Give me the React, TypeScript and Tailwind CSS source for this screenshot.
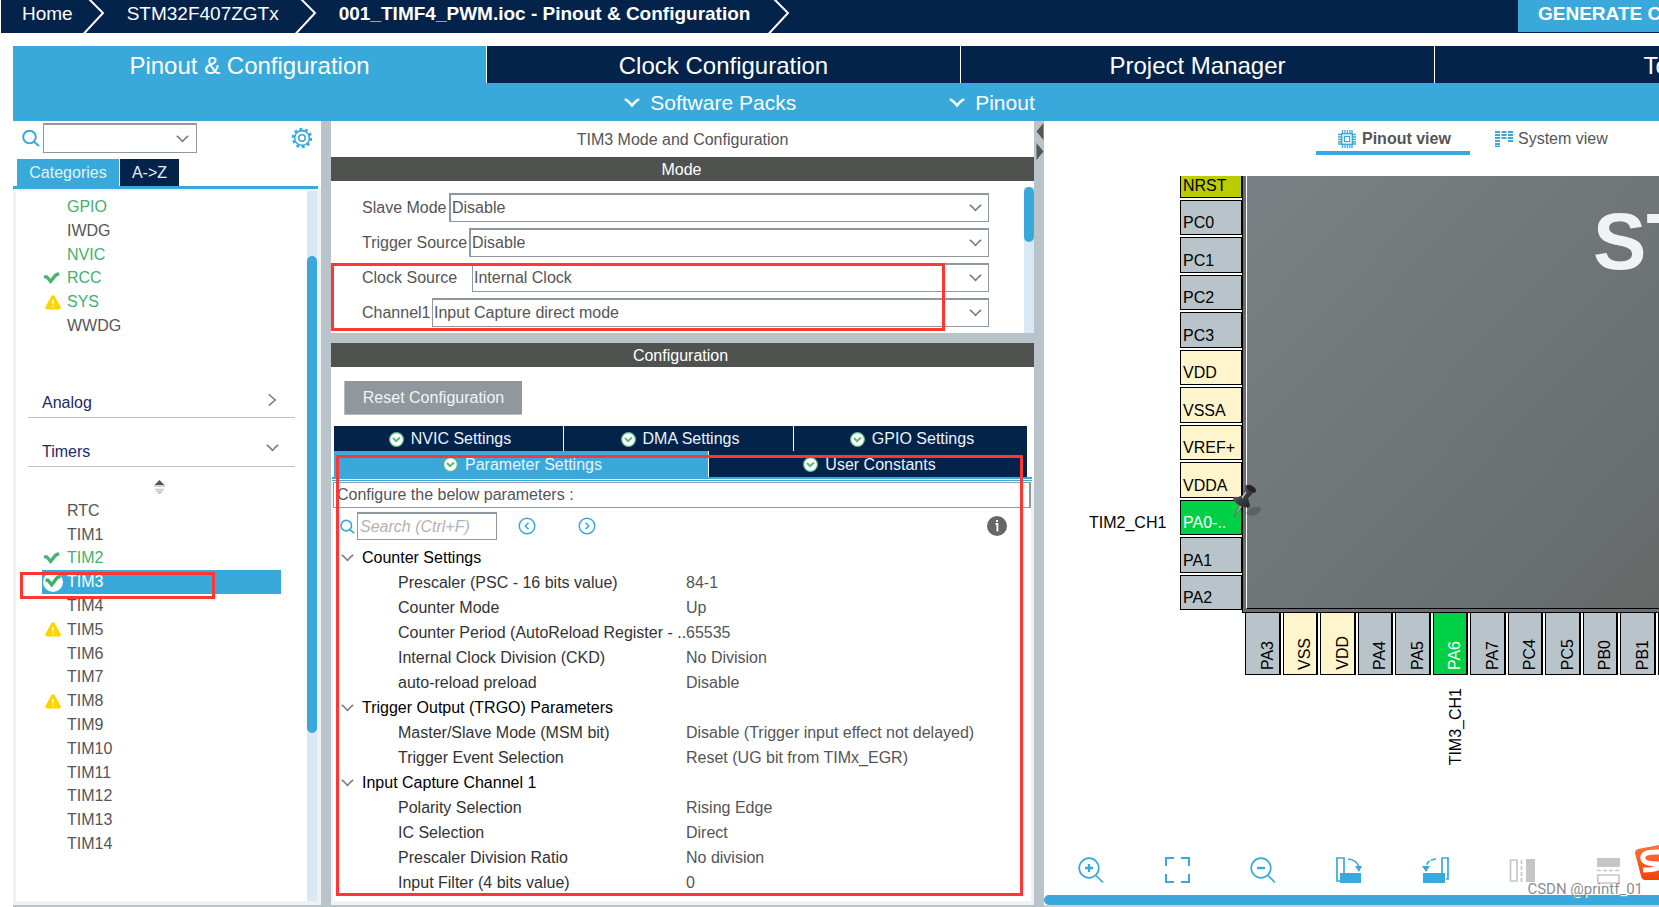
import { ReactNode } from 'react';
import clsx from 'clsx';

type Status = 'ok' | 'warn' | 'selected';

interface Item {
  name: string;
  status?: Status;
  enabled?: boolean;
}

const crumbs = [
  { label: 'Home', className: 'pr-[10px]' },
  { label: 'STM32F407ZGTx', className: 'pr-4' },
  { label: '001_TIMF4_PWM.ioc - Pinout & Configuration', className: 'pr-[18px] font-bold' },
];

const mainTabs = ['Pinout & Configuration', 'Clock Configuration', 'Project Manager', 'Tools'];

const systemCore: Item[] = [
  { name: 'GPIO', enabled: true },
  { name: 'IWDG' },
  { name: 'NVIC', enabled: true },
  { name: 'RCC', enabled: true, status: 'ok' },
  { name: 'SYS', enabled: true, status: 'warn' },
  { name: 'WWDG' },
];

const timers: Item[] = [
  { name: 'RTC' },
  { name: 'TIM1' },
  { name: 'TIM2', enabled: true, status: 'ok' },
  { name: 'TIM3', status: 'selected' },
  { name: 'TIM4' },
  { name: 'TIM5', status: 'warn' },
  { name: 'TIM6' },
  { name: 'TIM7' },
  { name: 'TIM8', status: 'warn' },
  { name: 'TIM9' },
  { name: 'TIM10' },
  { name: 'TIM11' },
  { name: 'TIM12' },
  { name: 'TIM13' },
  { name: 'TIM14' },
];

const modes = [
  { id: 'slave', label: 'Slave Mode', value: 'Disable', width: 'w-[87px]', border: 'border-l-2' },
  { id: 'trigger', label: 'Trigger Source', value: 'Disable', width: 'w-[107px]', border: 'border-l-2' },
  { id: 'clock', label: 'Clock Source', value: 'Internal Clock', width: 'w-[110px]', border: 'border-l' },
  { id: 'channel1', label: 'Channel1', value: 'Input Capture direct mode', width: 'w-[70px]', border: 'border-l' },
];

const parameters = [
  {
    group: 'Counter Settings',
    rows: [
      ['Prescaler (PSC - 16 bits value)', '84-1'],
      ['Counter Mode', 'Up'],
      ['Counter Period (AutoReload Register - ..', '65535'],
      ['Internal Clock Division (CKD)', 'No Division'],
      ['auto-reload preload', 'Disable'],
    ],
  },
  {
    group: 'Trigger Output (TRGO) Parameters',
    rows: [
      ['Master/Slave Mode (MSM bit)', 'Disable (Trigger input effect not delayed)'],
      ['Trigger Event Selection', 'Reset (UG bit from TIMx_EGR)'],
    ],
  },
  {
    group: 'Input Capture Channel 1',
    rows: [
      ['Polarity Selection', 'Rising Edge'],
      ['IC Selection', 'Direct'],
      ['Prescaler Division Ratio', 'No division'],
      ['Input Filter (4 bits value)', '0'],
    ],
  },
];

const leftPins = ['PC0', 'PC1', 'PC2', 'PC3', 'VDD', 'VSSA', 'VREF+', 'VDDA', 'PA0-..', 'PA1', 'PA2'];
const bottomPins = ['PA3', 'VSS', 'VDD', 'PA4', 'PA5', 'PA6', 'PA7', 'PC4', 'PC5', 'PB0', 'PB1', 'PB2'];

function pinColor(name: string) {
  if (name === 'PA0-..' || name === 'PA6') return 'bg-[#00d045] text-white';
  if (name.startsWith('V')) return 'bg-[#fff5cc] text-black';
  return 'bg-[#b8c3ca] text-black';
}

function Chevron({ className = 'text-[#7d7d7d]' }: { className?: string }) {
  return (
    <svg className={clsx('shrink-0', className)} width="13" height="8" viewBox="0 0 13 8" fill="none" stroke="currentColor" strokeWidth="1.5">
      <path d="M0.7 1C3 2 4.5 4.5 6.5 6.5C8.5 4.5 10 2 12.3 1" />
    </svg>
  );
}

function SearchIcon({ size }: { size: number }) {
  return (
    <svg className="shrink-0 text-[#39a9dc]" width={size} height={size} viewBox="0 0 18 18" fill="none" stroke="currentColor" strokeWidth="2">
      <circle cx="7.5" cy="8" r="6.3" />
      <path d="M11.5 12.5L17 17" />
    </svg>
  );
}

function GearIcon() {
  return (
    <svg width="22" height="22" viewBox="0 0 22 22" fill="none" stroke="#39a9dc">
      <circle cx="11" cy="11" r="9" strokeWidth="2.4" strokeDasharray="2.9 2.755" />
      <circle cx="11" cy="11" r="7.4" strokeWidth="1.6" />
      <circle cx="11" cy="11" r="3.2" strokeWidth="1.6" />
    </svg>
  );
}

function StatusIcon({ status }: { status?: Status }) {
  if (status === 'warn') {
    return (
      <svg className="ml-[3px]" width="16" height="15" viewBox="0 0 16 15">
        <path d="M6.3 1.2Q8 -0.8 9.7 1.2L15.6 12Q16.4 14.4 14 14.4H2Q-0.4 14.4 0.4 12Z" fill="#ffd500" />
        <path d="M8 5V9.6M8 11V12.6" stroke="#fff" strokeWidth="1.4" />
      </svg>
    );
  }
  if (status === 'ok') {
    return (
      <svg className="ml-px" width="17" height="13" viewBox="0 0 17 13" fill="none" stroke="#4bb272">
        <path d="M1 4.6L3.8 5L7.6 9.4L12.4 3.4L16 1.4" strokeWidth="3.4" />
      </svg>
    );
  }
  if (status === 'selected') {
    return (
      <svg className="ml-px" width="20" height="20" viewBox="0 0 20 20" fill="none">
        <circle cx="10" cy="10" r="10" fill="#fff" />
        <path d="M2.6 8L5 8.3L8.8 12.8L14 5.8L17.4 4" stroke="#41ad6d" strokeWidth="3.4" />
      </svg>
    );
  }
  return null;
}

function TabCheck() {
  return (
    <svg className="shrink-0" width="15" height="15" viewBox="0 0 15 15" fill="none">
      <circle cx="7.5" cy="7.5" r="6.9" fill="#fff" stroke="#58b77f" strokeWidth="1.2" />
      <path d="M4 6L7 9.2L11 5.4" stroke="#58b77f" strokeWidth="2" />
    </svg>
  );
}

function ItemList({ items, className }: { items: Item[]; className: string }) {
  return (
    <ul className={clsx('grid auto-rows-fr', className)}>
      {items.map(({ name, status, enabled }) => (
        <li key={name} className="px-[26px]">
          <button
            className={clsx(
              'flex h-full w-full items-center text-left leading-none',
              status === 'selected' && 'bg-[#39a9dc] text-white',
              enabled && 'text-[#45b06c]',
            )}
          >
            <span className="flex w-[25px] shrink-0 items-center">
              <StatusIcon status={status} />
            </span>
            {name}
          </button>
        </li>
      ))}
    </ul>
  );
}

function Header() {
  return (
    <header className="ml-px flex h-[33px] bg-[#03234b] text-[19px] text-white">
      <nav className="flex pl-[21px]">
        {crumbs.map(({ label, className }) => (
          <div key={label} className="flex">
            <a href="#" className={clsx('whitespace-nowrap leading-[27px]', className)}>
              {label}
            </a>
            <svg className="mr-[22px]" width="22" height="33" viewBox="0 0 22 33" fill="none" stroke="#fff" strokeWidth="2">
              <path d="M6 -1L20 13L0.5 34" />
            </svg>
          </div>
        ))}
      </nav>
      <button className="ml-auto h-8 w-[141px] overflow-hidden whitespace-nowrap bg-[#39a9dc] pb-[5px] pl-5 text-left font-bold">
        GENERATE CODE
      </button>
    </header>
  );
}

function MainTabs() {
  return (
    <>
      <nav className="mt-[13px] ml-[13px] flex overflow-hidden">
        {mainTabs.map((tab, i) => (
          <button
            key={tab}
            className={clsx(
              'h-[37px] w-[474px] shrink-0 border-r border-white pt-[2px] text-2xl leading-none text-white',
              i === 0 ? 'bg-[#39a9dc]' : 'bg-[#03234b]',
            )}
          >
            {tab}
          </button>
        ))}
      </nav>
      <div className="ml-[13px] flex h-[38px] items-center justify-center gap-[153px] bg-[#39a9dc] pr-[13px] pt-[2px] text-[21px] text-white">
        {['Software Packs', 'Pinout'].map((label) => (
          <button key={label} className="flex items-center gap-[10px]">
            <svg width="16" height="10" viewBox="0 0 16 10" fill="none" stroke="currentColor" strokeWidth="2.6">
              <path d="M0.8 1.5Q3 1.5 8 7.5Q13 1.5 15.2 1.5" />
            </svg>
            {label}
          </button>
        ))}
      </div>
    </>
  );
}

function Category({ name, children }: { name: string; children: ReactNode }) {
  return (
    <button className="mx-3 flex h-[49px] items-end justify-between border-b border-[#b8c3ca] pb-[2px] pl-[14px] text-left text-[#1d2a66]">
      {name}
      {children}
    </button>
  );
}

function Sidebar() {
  return (
    <aside className="flex w-[308px] shrink-0 flex-col">
      <div className="flex h-[34px] items-center pl-[9px] pr-2">
        <SearchIcon size={18} />
        <label className="sr-only" htmlFor="filter">
          Filter peripherals
        </label>
        <div className="relative ml-[3px]">
          <select id="filter" className="block h-[30px] w-[154px] appearance-none border border-t-2 border-[#8f989f] bg-white" />
          <Chevron className="pointer-events-none absolute right-2 top-3 text-[#7d7d7d]" />
        </div>
        <button aria-label="Settings" className="ml-auto">
          <GearIcon />
        </button>
      </div>
      <div className="mt-1 flex gap-px pl-1 text-[#e3f2fa]">
        <button className="h-[27px] w-[102px] bg-[#39a9dc] pt-px">Categories</button>
        <button className="h-[27px] w-[59px] bg-[#03234b] pt-px">A-&gt;Z</button>
      </div>
      <div className="mr-[3px] h-[3px] bg-[#39a9dc]" />
      <div className="flex grow border-b-4 border-l-[3px] border-r-4 border-t-2 border-[#eff1f3]">
        <div className="flex min-w-0 grow flex-col pt-1">
          <ItemList items={systemCore} className="h-[143px]" />
          <div className="h-[31px]" />
          <Category name="Analog">
            <svg className="mb-2 mr-[18px]" width="9" height="14" viewBox="0 0 9 14" fill="none" stroke="#7d7d7d" strokeWidth="1.5">
              <path d="M1 1C2 3 5 5 7.5 7C5 9 2 11 1 13" />
            </svg>
          </Category>
          <Category name="Timers">
            <Chevron className="mb-3 mr-4 text-[#7d7d7d]" />
          </Category>
          <div className="flex h-8 items-center justify-center pr-1 pt-2">
            <svg width="11" height="14" viewBox="0 0 11 14">
              <path d="M5.5 0L10.5 5H0.5Z" fill="#555" />
              <path d="M0 6H11M1 9.5H10M2.5 11.5H8.5M4 13.2H7" stroke="#c4c4c4" strokeWidth="1.6" />
            </svg>
          </div>
          <div className="relative">
            <ItemList items={timers} className="h-[357px]" />
            <div className="pointer-events-none absolute left-1 top-[73px] h-[27px] w-[195px] border-[3px] border-[#ff3733]" />
          </div>
        </div>
        <div className="w-[10px] shrink-0 bg-[#d9e8f5] pt-[65px]">
          <div className="h-[477px] rounded-full bg-[#39a9dc]" />
        </div>
      </div>
      <div className="h-[2px] bg-[#b8c3ca]" />
    </aside>
  );
}

function ModePanel() {
  return (
    <section>
      <h2 className="pt-px text-center leading-[35px]">TIM3 Mode and Configuration</h2>
      <h3 className="bg-[#505250] pr-[2px] pt-px text-center leading-[23px] text-white">Mode</h3>
      <div className="relative flex h-[152px]">
        <div className="flex grow flex-col gap-[6px] pl-[31px] pr-[35px] pt-3">
          {modes.map(({ id, label, value, width, border }) => (
            <div key={id} className="flex items-center">
              <label htmlFor={id} className={clsx('shrink-0 whitespace-nowrap', width)}>
                {label}
              </label>
              <div className="relative grow">
                <select
                  id={id}
                  className={clsx('block h-[29px] w-full appearance-none border-b border-r border-t-2 border-[#8f989f] bg-white pl-px', border)}
                >
                  <option>{value}</option>
                </select>
                <Chevron className="pointer-events-none absolute right-[7px] top-[11px] text-[#7d7d7d]" />
              </div>
            </div>
          ))}
        </div>
        <div className="mt-[6px] w-[10px] shrink-0 bg-[#d9e8f5]">
          <div className="h-[55px] rounded-full bg-[#39a9dc]" />
        </div>
        <div className="pointer-events-none absolute left-0 top-[82px] h-[68px] w-[614px] border-[3px] border-[#ff3733]" />
      </div>
    </section>
  );
}

function ConfigTab({ label, active }: { label: string; active?: boolean }) {
  return (
    <button
      className={clsx(
        'flex items-center justify-center gap-[7px] pl-[3px] pt-px text-[#eaf3fa]',
        active ? 'bg-[#39a9dc]' : 'bg-[#03234b]',
      )}
    >
      <TabCheck />
      {label}
    </button>
  );
}

function StepButton({ label, path }: { label: string; path: string }) {
  return (
    <button aria-label={label}>
      <svg width="18" height="18" viewBox="0 0 18 18" fill="none" stroke="#39a9dc" strokeWidth="1.5">
        <circle cx="9" cy="9" r="7.8" />
        <path d={path} />
      </svg>
    </button>
  );
}

function ConfigurationPanel() {
  return (
    <section className="relative flex grow flex-col">
      <h3 className="bg-[#505250] pr-1 pt-px text-center leading-[23px] text-white">Configuration</h3>
      <div className="px-[13px] pb-[11px] pt-[14px]">
        <button className="block h-[34px] w-[178px] border-b border-l border-[#b4b9bd] bg-[#90979d] text-[#f2f5f7]">Reset Configuration</button>
      </div>
      <div className="flex flex-col gap-px pl-[3px] pr-[7px]">
        <div className="grid h-6 grid-cols-[229fr_229fr_233fr] gap-px">
          <ConfigTab label="NVIC Settings" />
          <ConfigTab label="DMA Settings" />
          <ConfigTab label="GPIO Settings" />
        </div>
        <div className="grid h-[26px] grid-cols-[374fr_318fr] gap-px">
          <ConfigTab label="Parameter Settings" active />
          <ConfigTab label="User Constants" />
        </div>
      </div>
      <div className="ml-px mr-[2px] h-1 border-b border-t-2 border-[#39a9dc]" />
      <div className="flex grow flex-col border-b-4 border-l-2 border-r-[3px] border-[#eff1f3] pt-px">
        <p className="h-[26px] border border-r-2 border-[#8f989f] pl-[3px] leading-6">Configure the below parameters :</p>
        <div className="flex h-[37px] items-center pb-px pl-[7px] pr-6">
          <SearchIcon size={15} />
          <input
            aria-label="Search parameters"
            placeholder="Search (Ctrl+F)"
            className="ml-[2px] h-7 w-[140px] border border-t-2 border-[#8f989f] pl-[2px] italic placeholder:text-[#b3b3b3]"
          />
          <div className="ml-[21px] flex grow gap-[42px]">
            <StepButton label="Previous match" path="M10.5 5.8L7.3 9L10.5 12.2" />
            <StepButton label="Next match" path="M7.5 5.8L10.7 9L7.5 12.2" />
          </div>
          <button aria-label="Information">
            <svg width="20" height="20" viewBox="0 0 20 20">
              <circle cx="10" cy="10" r="10" fill="#666" />
              <path d="M8.5 8H10.4V15.5M10 4V6" stroke="#fff" strokeWidth="1.8" fill="none" />
            </svg>
          </button>
        </div>
        <table className="w-full table-fixed">
          <colgroup>
            <col className="w-[353px]" />
            <col />
          </colgroup>
          {parameters.map(({ group, rows }) => (
            <tbody key={group}>
              <tr className="h-[25px]">
                <th colSpan={2} className="p-0 text-left font-normal text-black">
                  <button className="flex items-center gap-2 pl-2 leading-[25px]">
                    <Chevron />
                    {group}
                  </button>
                </th>
              </tr>
              {rows.map(([name, value]) => (
                <tr key={name} className="h-[25px]">
                  <td className="whitespace-nowrap p-0 pl-[65px] leading-[25px] text-[#333]">{name}</td>
                  <td className="whitespace-nowrap p-0">{value}</td>
                </tr>
              ))}
            </tbody>
          ))}
        </table>
      </div>
      <div className="h-[2px] bg-[#b8c3ca]" />
      <div className="pointer-events-none absolute left-[5px] top-[112px] h-[441px] w-[687px] border-[3px] border-[#ff3733]" />
    </section>
  );
}

function Pushpin() {
  return (
    <svg className="absolute left-[187px] top-[308px]" width="32" height="36" viewBox="0 0 32 36">
      <defs>
        <linearGradient id="pin" x1="0" y1="0" x2="1" y2="1">
          <stop offset="0" stopColor="#8a8a8a" />
          <stop offset="0.5" stopColor="#3c3c3c" />
          <stop offset="1" stopColor="#1c1c1c" />
        </linearGradient>
      </defs>
      <path d="M14 30Q20 20 30 24Q30 30 20 32Z" fill="#000" opacity="0.18" />
      <path d="M9 20L3 33L11 23Z" fill="#a9a9a9" stroke="#666" strokeWidth="0.8" />
      <path d="M2 15Q2 12 7 13L12 11L14 5Q12 2 15 1Q22 0 25 6Q26 9 22 9L17 14L19 22Q18 25 14 23Q6 22 2 15Z" fill="url(#pin)" />
      <ellipse cx="20" cy="4.5" rx="5" ry="2.6" transform="rotate(28 20 4.5)" fill="#222" />
      <path d="M15 8L11 14" stroke="#c4c4c4" strokeWidth="1.4" />
    </svg>
  );
}

function ChipDiagram() {
  return (
    <div className="relative min-h-[600px] grow overflow-hidden text-black">
      <div className="absolute left-[136px] top-0 w-[62px]">
        <div className="h-[22px] border border-t-0 border-black bg-[#bbcc00] pl-[2px] leading-[19px]">NRST</div>
        <div className="mt-[2px] grid h-[410px] auto-rows-fr gap-[2px]">
          {leftPins.map((pin) => (
            <div key={pin} className={clsx('flex items-end border border-black pb-[2px] pl-[2px] leading-[18px]', pinColor(pin))}>
              {pin}
            </div>
          ))}
        </div>
      </div>
      <span className="absolute left-[45px] top-[338px] leading-[18px]">TIM2_CH1</span>

      <div className="absolute left-[198px] right-0 top-0 h-[437px] border-b border-l border-black bg-[#6b6e70] pb-[3px] pl-[3px]">
        <div className="h-full overflow-hidden border-b border-l border-b-black border-l-white bg-linear-to-br from-[#7b8184] to-[#656a69] pl-[346px] pt-5">
          <span className="text-[80px] font-bold leading-[92px] text-[#f0f2f5]">ST</span>
        </div>
      </div>

      <div className="absolute left-[201px] top-[437px] grid h-[62px] w-[448px] grid-cols-12 gap-x-[2px]">
        {bottomPins.map((pin) => (
          <div key={pin} className={clsx('flex items-end justify-end border border-r-2 border-t-0 border-black pb-1 pr-[2px]', pinColor(pin))}>
            <span className="rotate-180 leading-[18px] [writing-mode:vertical-rl]">{pin}</span>
          </div>
        ))}
      </div>
      <span className="absolute left-[403px] top-[512px] rotate-180 leading-[18px] [writing-mode:vertical-rl]">TIM3_CH1</span>
      <Pushpin />
    </div>
  );
}

function ToolButton({ label, muted, children }: { label: string; muted?: boolean; children: ReactNode }) {
  return (
    <button aria-label={label} className={clsx('w-[86px] shrink-0', muted ? 'text-[#c6c6c6]' : 'text-[#39a9dc]')}>
      <svg width="28" height="28" viewBox="0 0 28 28" fill="none" stroke="currentColor" strokeWidth="1.7">
        {children}
      </svg>
    </button>
  );
}

function PinoutView() {
  return (
    <main className="relative flex min-w-0 grow flex-col overflow-hidden">
      <div className="flex h-[55px] items-start pl-[272px]">
        <button className="flex h-[34px] w-[154px] shrink-0 items-center gap-[6px] border-b-4 border-[#39a9dc] pl-[22px] pt-[6px] font-bold">
          <svg width="18" height="18" viewBox="0 0 18 18" fill="none" stroke="#39a9dc">
            <rect x="3.7" y="3.7" width="10.6" height="10.6" strokeWidth="1.4" />
            <rect x="6.4" y="6.4" width="5.2" height="5.2" strokeWidth="1.2" />
            <path d="M4.5 0V3.5M7 0V3.5M9.5 0V3.5M12 0V3.5M14 0V3.5M4.5 14.5V18M7 14.5V18M9.5 14.5V18M12 14.5V18M14 14.5V18" strokeWidth="1.3" />
            <path d="M0 4.5H3.5M0 7H3.5M0 9.5H3.5M0 12H3.5M0 14H3.5M14.5 4.5H18M14.5 7H18M14.5 9.5H18M14.5 12H18M14.5 14H18" strokeWidth="1.3" />
          </svg>
          Pinout view
        </button>
        <button className="ml-[25px] flex h-[34px] shrink-0 items-center gap-[5px] pt-[2px]">
          <svg width="18" height="16" viewBox="0 0 18 16" stroke="#39a9dc" strokeWidth="2">
            <path d="M0 1H5M6.5 1H11.5M13 1H18M0 4H5M6.5 4H11.5M13 4H18M0 7H5M6.5 7H11.5M13 7H18M0 10H5M13 10H18M0 13H5M0 15.5H5" />
          </svg>
          System view
        </button>
      </div>
      <ChipDiagram />
      <div className="flex h-[42px] items-start overflow-hidden pl-[33px] pt-[3px]">
        <ToolButton label="Zoom in">
          <circle cx="12" cy="12" r="9.8" />
          <path d="M19 19.5L26 26.5" />
          <path d="M12 8V16M8 12H16" strokeWidth="2.4" />
        </ToolButton>
        <ToolButton label="Best fit">
          <path d="M11 2H3V10M18 2H26V10M11 26H3V18M18 26H26V18" strokeWidth="2" />
        </ToolButton>
        <ToolButton label="Zoom out">
          <circle cx="12" cy="12" r="9.8" />
          <path d="M19 19.5L26 26.5" />
          <path d="M8 12H16" strokeWidth="2.4" />
        </ToolButton>
        <ToolButton label="Rotate clockwise">
          <path d="M5 25H2V2H9V18" />
          <path d="M5 17H26V27H5Z" fill="currentColor" stroke="none" />
          <path d="M13 3Q22 4 24 11" />
          <path d="M20 10H27L24 16Z" fill="currentColor" stroke="none" />
        </ToolButton>
        <ToolButton label="Rotate counter-clockwise">
          <path d="M25 23H27V2H21V18" />
          <path d="M2 17H24V27H2Z" fill="currentColor" stroke="none" />
          <path d="M15 3Q6 4 5 11" strokeDasharray="5 1.5" />
          <path d="M1 10H9L5 16Z" fill="currentColor" stroke="none" />
        </ToolButton>
        <ToolButton label="Flip horizontally" muted>
          <path d="M3.5 4H10V25H3.5Z" />
          <path d="M14.5 4V26" strokeDasharray="4 2" />
          <path d="M19 3H28V26H19Z" fill="currentColor" stroke="none" />
        </ToolButton>
        <ToolButton label="Flip vertically" muted>
          <path d="M4 2H27V11H4Z" fill="currentColor" stroke="none" />
          <path d="M4 14.5H27" strokeDasharray="4 2" />
          <path d="M4.8 19H26V27H4.8Z" />
        </ToolButton>
      </div>
      <div className="h-[10px] rounded-l-full bg-[#39a9dc]" />
      <div className="h-[2px] bg-[#c9d2d8]" />

      <svg className="absolute bottom-[26px] right-0" width="24" height="37" viewBox="0 0 24 37">
        <defs>
          <linearGradient id="badge" x1="0" y1="0" x2="0" y2="1">
            <stop offset="0" stopColor="#f9743f" />
            <stop offset="1" stopColor="#f04406" />
          </linearGradient>
        </defs>
        <path d="M3 5L24 1V36L10 36Q7 36 6 32L0 9Q0 6 3 5Z" fill="url(#badge)" />
        <path d="M25 8Q6 7 8 15Q9 20 24 20Q27 26 8 26" fill="none" stroke="#fff" strokeWidth="5" />
      </svg>
      <span className="absolute bottom-2 right-4 text-[15px] leading-5 text-[#8d8d8d] [text-shadow:1px_1px_0_#fff] font-['Roboto','Liberation_Sans',sans-serif]">
        CSDN @printf_01
      </span>
    </main>
  );
}

export default function App() {
  return (
    <div className="flex min-h-screen flex-col overflow-hidden bg-white font-['Liberation_Sans',Arial,sans-serif] text-base text-[#555]">
      <Header />
      <MainTabs />
      <div className="ml-[13px] flex grow">
        <Sidebar />
        <div className="w-[10px] shrink-0 bg-[#b8c3ca]" />
        <div className="flex w-[703px] shrink-0 flex-col">
          <ModePanel />
          <div className="h-[10px] bg-[#b8c3ca]" />
          <ConfigurationPanel />
        </div>
        <div className="w-[10px] shrink-0 bg-[#b8c3ca] pt-[2px]">
          <svg width="10" height="38" viewBox="0 0 10 38" fill="#565656">
            <path d="M9.5 0V17L2.5 8.5Z" />
            <path d="M2.5 20V37L9.5 28.5Z" />
          </svg>
        </div>
        <PinoutView />
      </div>
    </div>
  );
}
